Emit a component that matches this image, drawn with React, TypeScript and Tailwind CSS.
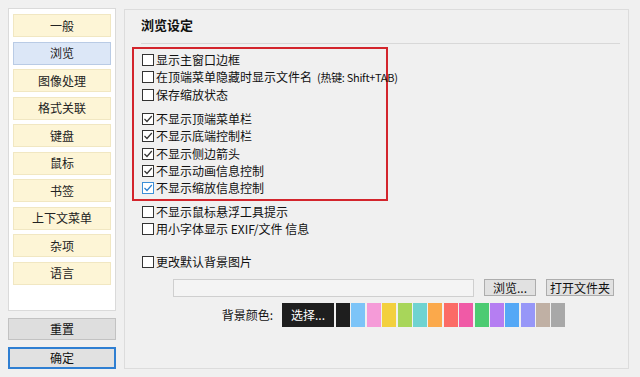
const font = "font-['Microsoft_YaHei','Noto_Sans_CJK_SC',sans-serif]";

const navItems = ['一般', '浏览', '图像处理', '格式关联', '键盘', '鼠标', '书签', '上下文菜单', '杂项', '语言'];

const swatches = [
  '#1e1e1e', '#7cc4f8', '#f59bd8', '#f3d03e', '#a8d65a', '#6fd3d1', '#fba94b', '#fb6b66',
  '#f05aa6', '#4ccb72', '#b57ef2', '#54a8f6', '#9797f8', '#c0b0a4', '#a8a8a8',
];

function Box({ checked, hover }: { checked?: boolean; hover?: boolean }) {
  return (
    <span
      className={`w-[12px] h-[12px] shrink-0 border bg-white flex items-center justify-center ${
        hover ? 'border-[#3c8fd8]' : 'border-[#333]'
      }`}
    >
      {checked && (
        <svg width="10" height="10" viewBox="0 0 10 10">
          <path d="M1.5 5 L4 7.5 L8.8 2" fill="none" stroke={hover ? '#2a7fd0' : '#333'} strokeWidth="1.2" />
        </svg>
      )}
    </span>
  );
}

function Check({ label, hint, checked, hover }: { label: string; hint?: string; checked?: boolean; hover?: boolean }) {
  return (
    <div className="h-[17.3px] flex items-center gap-[2px] text-[12px] text-[#111] leading-none whitespace-nowrap">
      <Box checked={checked} hover={hover} />
      <span>{label}</span>
      {hint && <span className="ml-[3px] text-[11px] tracking-[-0.3px]">{hint}</span>}
    </div>
  );
}

export default function App() {
  return (
    <div className={`w-[640px] h-[377px] bg-[#f0f0f0] flex gap-[8px] pl-[8px] pt-[8px] ${font}`}>
      <div className="w-[108px] flex flex-col">
        <div className="h-[303px] bg-white border border-[#dadada] flex flex-col gap-[4.5px] px-[4px] pt-[5px]">
          {navItems.map((n) => (
            <div
              key={n}
              className={`h-[23px] flex items-center justify-center text-[12px] text-[#222] border ${
                n === '浏览' ? 'bg-[#dce7f7] border-[#b9cbe5]' : 'bg-[#fdf5d6] border-[#f1e7c2]'
              }`}
            >
              {n}
            </div>
          ))}
        </div>
        <div className="mt-[7px] h-[22px] bg-[#dedede] border border-[#c2c2c2] flex items-center justify-center text-[12px] text-[#111]">
          重置
        </div>
        <div className="mt-[7px] h-[22px] bg-[#e1e1e1] border-2 border-[#2f7fd2] flex items-center justify-center text-[12px] text-[#111]">
          确定
        </div>
      </div>

      <div className="mt-[1px] w-[505px] h-[360px] border border-[#dcdcdc] flex flex-col">
        <div className="pl-[16px] pb-[4px] h-[33px] flex items-center text-[13px] font-bold text-[#111]">浏览设定</div>
        <div className="ml-[16px] mr-[8px] h-px bg-[#d8d8d8]" />
        <div className="ml-[7px] mt-[3px] w-[256px] h-[154px] border-2 border-[#d3252c] pl-[8px] pt-[2.5px] flex flex-col">
          <Check label="显示主窗口边框" />
          <Check label="在顶端菜单隐藏时显示文件名" hint="(热键: Shift+TAB)" />
          <Check label="保存缩放状态" />
          <div className="h-[7px]" />
          <Check label="不显示顶端菜单栏" checked />
          <Check label="不显示底端控制栏" checked />
          <Check label="不显示侧边箭头" checked />
          <Check label="不显示动画信息控制" checked />
          <Check label="不显示缩放信息控制" checked hover />
        </div>
        <div className="pl-[17px] mt-[2px] flex flex-col">
          <Check label="不显示鼠标悬浮工具提示" />
          <Check label="用小字体显示 EXIF/文件 信息" />
          <div className="h-[16px]" />
          <Check label="更改默认背景图片" />
        </div>
        <div className="mt-[8px] pl-[48px] flex items-center gap-[10px]">
          <div className="w-[301px] h-[18px] bg-[#f4f4f4] border border-[#cfcfcf]" />
          <div className="w-[52px] h-[17px] bg-[#e1e1e1] border border-[#adadad] flex items-center justify-center text-[12px] text-[#111]">
            浏览...
          </div>
          <div className="w-[68px] h-[17px] bg-[#e1e1e1] border border-[#adadad] flex items-center justify-center text-[12px] text-[#111]">
            打开文件夹
          </div>
        </div>
        <div className="mt-[6px] flex items-center h-[24px]">
          <div className="w-[148px] text-right text-[12px] text-[#111]">背景颜色:</div>
          <div className="ml-[9px] w-[52px] h-[24px] bg-[#1e1e1e] text-white text-[12px] flex items-center justify-center">
            选择...
          </div>
          <div className="ml-[2px] flex gap-[1.4px]">
            {swatches.map((c) => (
              <div key={c} className="w-[14px] h-[24px]" style={{ backgroundColor: c }} />
            ))}
          </div>
        </div>
      </div>
    </div>
  );
}
